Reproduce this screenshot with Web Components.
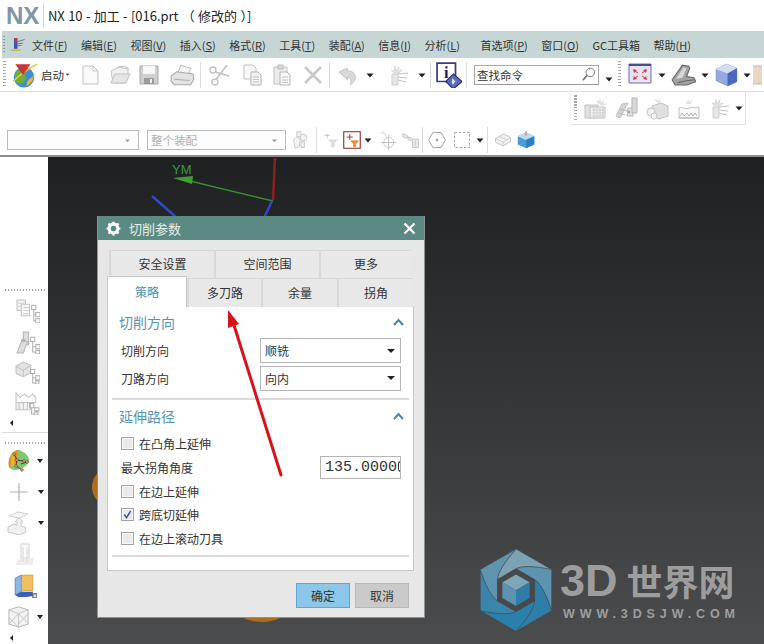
<!DOCTYPE html>
<html lang="zh"><head><meta charset="utf-8"><title>NX 10</title>
<style>html,body{margin:0;padding:0;background:#fff}body{font-family:"Noto Sans CJK SC","Noto Sans",sans-serif}</style></head>
<body>
<nx-app>
  <nx-titlebar slot="top">NX 10 - 加工 - [016.prt （ 修改的 ）]</nx-titlebar>
  <nx-menubar slot="top">
    <nx-menu k="F">文件</nx-menu><nx-menu k="E">编辑</nx-menu><nx-menu k="V">视图</nx-menu><nx-menu k="S">插入</nx-menu><nx-menu k="R">格式</nx-menu><nx-menu k="T">工具</nx-menu><nx-menu k="A">装配</nx-menu><nx-menu k="I">信息</nx-menu><nx-menu k="L">分析</nx-menu><nx-menu k="P" style="margin-left:7px">首选项</nx-menu><nx-menu k="O">窗口</nx-menu><nx-menu>GC工具箱</nx-menu><nx-menu k="H">帮助</nx-menu>
  </nx-menubar>
  <nx-toolbar slot="top" h="34" border>
    <nx-grip style="margin-left:3px"></nx-grip>
    <nx-tool icon="globe" w="29" s="26"></nx-tool>
    <nx-start></nx-start>
    <nx-tool icon="new" w="30" style="margin-left:3px"></nx-tool><nx-tool icon="open" w="30"></nx-tool><nx-tool icon="save" w="28"></nx-tool><nx-tool icon="print" w="37" s="26"></nx-tool><nx-sep></nx-sep>
    <nx-tool icon="scissors" w="36"></nx-tool><nx-tool icon="copy" w="29"></nx-tool><nx-tool icon="paste" w="31"></nx-tool><nx-tool icon="x" w="32"></nx-tool><nx-sep></nx-sep>
    <nx-tool icon="undo" w="34"></nx-tool><nx-tool icon="dd" w="12"></nx-tool><nx-tool icon="burst" w="36" style="margin-left:4px"></nx-tool><nx-tool icon="dd" w="12"></nx-tool><nx-sep style="margin-left:2px"></nx-sep>
    <nx-tool icon="info" w="35" s="26"></nx-tool><nx-sep></nx-sep>
    <nx-search></nx-search>
    <nx-tool icon="dd" w="12" style="margin-left:4px;padding-top:8px;box-sizing:border-box"></nx-tool>
    <nx-grip style="margin-left:3px"></nx-grip>
    <nx-tool icon="fit" w="32"></nx-tool><nx-tool icon="dd" w="12"></nx-tool><nx-tool icon="sketch" w="31" s="25"></nx-tool><nx-tool icon="dd" w="12"></nx-tool><nx-tool icon="cube" w="30" s="25"></nx-tool><nx-tool icon="dd" w="12"></nx-tool><nx-tool icon="partial" w="9" s="24" style="overflow:hidden"></nx-tool>
  </nx-toolbar>
  <nx-toolbar slot="top" h="33" end>
    <nx-floatbar>
      <nx-grip></nx-grip>
      <nx-tool icon="f1" w="30" s="24"></nx-tool><nx-tool icon="f2" w="31" s="24"></nx-tool><nx-tool icon="f3" w="32" s="24"></nx-tool><nx-tool icon="f4" w="31" s="24"></nx-tool><nx-tool icon="burst" w="29" s="24"></nx-tool><nx-tool icon="dd" w="12"></nx-tool>
    </nx-floatbar>
  </nx-toolbar>
  <nx-toolbar slot="top" h="32" dark>
    <nx-combo style="margin-left:7px;width:132px"></nx-combo>
    <nx-combo style="margin-left:8px;width:139px">整个装配</nx-combo>
    <nx-tool icon="asm" w="30" s="20"></nx-tool><nx-sep></nx-sep>
    <nx-tool icon="filt" w="21" s="18" style="margin-left:3px"></nx-tool>
    <nx-tool icon="sel" w="21" s="18"></nx-tool><nx-tool icon="dd" w="12"></nx-tool>
    <nx-tool icon="snap" w="25" s="20"></nx-tool><nx-tool icon="snap2" w="23" s="20"></nx-tool><nx-sep></nx-sep>
    <nx-tool icon="hex" w="28" s="20"></nx-tool><nx-tool icon="rect" w="21" s="20"></nx-tool><nx-tool icon="dd" w="15"></nx-tool><nx-sep></nx-sep>
    <nx-tool icon="wire" w="30" s="18"></nx-tool><nx-tool icon="shade" w="15" s="18"></nx-tool>
  </nx-toolbar>
  <nx-sidebar slot="side">
    <nx-sgrip></nx-sgrip>
    <nx-tool icon="t1" w="44" h="32" s="25" style="margin-left:5px"></nx-tool>
    <nx-tool icon="t2" w="44" h="30" s="25" style="margin-left:5px"></nx-tool>
    <nx-tool icon="t3" w="44" h="30" s="25" style="margin-left:5px"></nx-tool>
    <nx-tool icon="t4" w="44" h="32" s="25" style="margin-left:5px"></nx-tool>
    <nx-more></nx-more>
    <nx-sdiv></nx-sdiv>
    <nx-sgrip style="margin-bottom:1.400px"></nx-sgrip>
    <nx-drop icon="s1" s="24" style="padding-left:6px"></nx-drop>
    <nx-drop icon="s2" s="24"></nx-drop>
    <nx-drop icon="s3" s="24"></nx-drop>
    <nx-drop icon="s4" s="24" nodd style="padding-left:13px"></nx-drop>
    <nx-drop icon="s5" s="25" nodd style="padding-left:12px"></nx-drop>
    <nx-drop icon="s6" s="23"></nx-drop>
    <nx-more></nx-more>
  </nx-sidebar>
  <nx-viewport slot="main">
    <nx-dialog heading="切削参数">
      <nx-tabs slot="tabs"></nx-tabs>
      <nx-section heading="切削方向" h="30">
        <nx-row label="切削方向"><nx-select>顺铣</nx-select></nx-row>
        <nx-row label="刀路方向"><nx-select>向内</nx-select></nx-row>
      </nx-section>
      <nx-section heading="延伸路径" h="32" last>
        <nx-check>在凸角上延伸</nx-check>
        <nx-row label="最大拐角角度" tight><nx-num>135.0000</nx-num></nx-row>
        <nx-check>在边上延伸</nx-check>
        <nx-check checked>跨底切延伸</nx-check>
        <nx-check>在边上滚动刀具</nx-check>
      </nx-section>
      <nx-button slot="actions" primary>确定</nx-button>
      <nx-button slot="actions">取消</nx-button>
    </nx-dialog>
    <nx-watermark></nx-watermark>
  </nx-viewport>
  <nx-annotation slot="over"></nx-annotation>
</nx-app>
<script>
const G='#c2c2c2',L='#ececec';
const ICONS={
dd:`<path d="M8.5 10.5h7L12 14.5z" fill="#222"/>`,
globe:`<circle cx="12" cy="14" r="9.500" fill="#3d8fd0"/><path d="M4 9c4-3 5 1 8 2s2 6-1 8-6 1-7-2 0-5 0-8z" fill="#6fae3a"/><path d="M15 18c2-3 5-4 6-6 0 5-3 9-7 10z" fill="#e3b53a"/><path d="M24 2C16 6 8 12 2 18" stroke="#e9c84a" stroke-width="1.500" fill="none"/><path d="M4 2h14l-7 10z" fill="#c9363a"/>`,
new:`<path d="M5 3h10l5 5v13H5z" fill="#fafafa" stroke="${G}"/><path d="M15 3v5h5" fill="none" stroke="${G}"/>`,
open:`<path d="M3 8l8-4 9 2v6l-3 8H5z" fill="#f2f2f2" stroke="${G}"/><path d="M3 20l4-9h15l-4 9z" fill="#e6e6e6" stroke="${G}"/><path d="M9 5l7-2 5 3" fill="none" stroke="${G}"/>`,
save:`<path d="M3 3h18v18H3z" fill="#d0d0d0" stroke="#aaa"/><path d="M6 3h12v8H6z" fill="#f7f7f7"/><path d="M7 15h10v6H7z" fill="#9a9a9a"/><path d="M13 16h2v4h-2z" fill="#eee"/>`,
print:`<path d="M8 10l3-7 9 3-2 5z" fill="#f5f5f5" stroke="${G}"/><path d="M2 13l5-4 15 2 1 5-3 5H5l-3-3z" fill="#e2e2e2" stroke="#aaa"/><path d="M5 16l14 1" stroke="#aaa"/>`,
scissors:`<circle cx="6" cy="7" r="3" fill="none" stroke="${G}" stroke-width="1.400"/><circle cx="8" cy="19" r="3" fill="none" stroke="${G}" stroke-width="1.400"/><path d="M8.500 9 22 13M9 16.500 20 2" stroke="${G}" stroke-width="1.600" fill="none"/>`,
copy:`<path d="M4 2h9l3 3v11H4z" fill="#f7f7f7" stroke="${G}"/><path d="M11 9h7l3 3v10H11z" fill="#f2f2f2" stroke="#b5b5b5"/><path d="M13 14h6M13 16.500h6M13 19h6" stroke="#c4c4c4"/>`,
paste:`<path d="M4 4h13v17H4z" fill="#ececec" stroke="${G}"/><path d="M8 2h5v4H8z" fill="#ddd" stroke="#b5b5b5"/><path d="M10 9h7l3 3v10H10z" fill="#f8f8f8" stroke="#b5b5b5"/><path d="M12 14h6M12 17h6M12 19.500h6" stroke="#c4c4c4"/>`,
x:`<path d="M4 4l16 16M20 4 4 20" stroke="#c8c8c8" stroke-width="2.600"/>`,
undo:`<path d="M4 9l8-4 1 3c5 0 8 3 7 8-1 3-3 5-5 6 2-4 1-7-3-8l1 3z" fill="#d8d8d8" stroke="#c4c4c4"/>`,
burst:`<path d="M9 3l1 4 3-3-1 4 4-1-3 3H8L5 7l3 1z" fill="#e2e2e2" stroke="#cfcfcf" stroke-width=".6"/><path d="M6 11h6v11H6z" fill="#e6e6e6" stroke="${G}" stroke-width=".7"/><path d="M12 11l10-1M12 14l9 1M12 17l8 2" stroke="${G}"/>`,
info:`<path d="M1 1h17v17H1z" fill="#fff" stroke="#3c3a80" stroke-width="1.600"/><text x="9.500" y="15" font-family="Liberation Serif" font-weight="700" font-size="15" text-anchor="middle" fill="#1c1a60">i</text><path d="M16 11l8 7-8 7-7-7z" fill="#5c6cb8" stroke="#222a70"/><path d="M15 15l3 3-3 3z" fill="#fff"/>`,
search:`<circle cx="14.500" cy="9" r="6" fill="#fff" stroke="#666" stroke-width="1.200"/><path d="M10.500 13 4 20" stroke="#777" stroke-width="2.400"/><path d="M12 6c1-1 2-1.500 3-1.500" stroke="#aaa" fill="none"/>`,
fit:`<path d="M1 1h22v19H1z" fill="#e6e4f4" stroke="#6a6ab0"/><path d="M1 1h22v2H1z" fill="#4a4a90"/><path d="M5 6l4 1-3 3zM19 6l-4 1 3 3zM5 17l4-1-3-3zM19 17l-4-1 3-3z" fill="#d8413a"/><path d="M7 8l3 2M17 8l-3 2M7 15l3-2M17 15l-3-2" stroke="#d8413a"/>`,
sketch:`<path d="M1 17 11 3l6 1 1 2-3 8 7 1 2 4-9 3H4z" fill="#a2a2a2" stroke="#666"/><path d="M5 16 12 5l3 1-4 9z" fill="#d8d8d8"/><path d="M6 20l9-2 8-1" stroke="#666" fill="none"/>`,
cube:`<path d="M2 7l10-5 10 4v13l-9 4-11-5z" fill="#93a9e0" stroke="#6b7fb8" stroke-width=".5"/><path d="M2 7l10-5 10 4-9 5z" fill="#d5ddf5"/><path d="M13 11l9-5v13l-9 4z" fill="#4a68c0"/>`,
partial:`<path d="M0 3h24v18H0z" fill="#e6d8c2" stroke="#bbb"/>`,
f1:`<path d="M2 9h13v13H2z" fill="#e2e2e2" stroke="${G}"/><path d="M7 11h15v11H7z" fill="#f2f2f2" stroke="${G}"/><path d="M9 14h12M9 17h12M9 20h12M11 12v10M14 12v10M17 12v10M20 12v10" stroke="#c4c4c4" stroke-width=".7"/><path d="M17 1l1 5 3-3-1 4 4 1-5 2-4-2-2-4 3 1z" fill="#e2e2e2"/>`,
f2:`<path d="M8 8l6-1-8 15-4-2z" fill="#d4d4d4" stroke="${G}"/><path d="M6 13l7 2M5 17l6 2" stroke="#b5b5b5"/><path d="M14 12h5v8h-6z" fill="#e2e2e2" stroke="#b5b5b5"/><path d="M18 2h5v15h-5z" fill="#d8d8d8" stroke="#b5b5b5"/><circle cx="15" cy="16" r="1.500" fill="#aaa"/>`,
f3:`<path d="M7 10l9-3 7 3v10l-9 3-7-3z" fill="#e0e0e0" stroke="${G}"/><circle cx="6" cy="16" r="4" fill="#f2f2f2" stroke="#c4c4c4"/><circle cx="9" cy="20" r="3" fill="#f2f2f2" stroke="#c4c4c4"/><path d="M12 1l1 4 3-2-1 4-4-1-2-3 3 1z" fill="#e2e2e2"/>`,
f4:`<path d="M2 12c4-2 5 2 10 0s6 1 10-1v11H2z" fill="#f8f8f8" stroke="${G}"/><path d="M3 20l2-3 2 3 3-3 2 3 2-3 2 3 2-3 2 3" fill="none" stroke="#b5b5b5"/><path d="M2 22h20" stroke="#b5b5b5"/><path d="M11 2l1 4 3-2-1 4h-4L8 5l3 1z" fill="#e2e2e2"/>`,
asm:`<path d="M7 2h5v6H7zM3 12l4-4 4 3-1 9-5 2z" fill="#f2f2f2" stroke="${G}"/><circle cx="15" cy="9" r="4" fill="#f2f2f2" stroke="${G}"/><path d="M12 14h4v7h-4z" fill="#f2f2f2" stroke="${G}"/>`,
filt:`<path d="M3 6h7M7 3v7" stroke="#c4c4c4"/><path d="M9 12h11l-4 4v5h-3v-5z" fill="#e2e2e2" stroke="#d0d0d0"/>`,
sel:`<path d="M1 1h22v22H1z" fill="#fff" stroke="#8a2020" stroke-width="1.400"/><path d="M5 8h8M9 4v8" stroke="#a03030" stroke-width="1.200"/><path d="M10 13h11l-4 4v4h-3v-4z" fill="#e8902a" stroke="#c87010" stroke-width=".6"/>`,
snap:`<circle cx="14" cy="15" r="6" fill="none" stroke="${G}"/><path d="M14 6v18M5 15h18" stroke="#b5b5b5"/><path d="M5 3c4 0 6 3 6 6" stroke="#c4c4c4" fill="none"/>`,
snap2:`<path d="M2 4l6 3-1 3-5-2zM8 8l5 2 1 3-5-1zM14 11h7v10h-7zM17 13v6" fill="#e8e8e8" stroke="#c4c4c4"/>`,
hex:`<path d="M7 3h10l5 9-5 9H7l-5-9z" fill="none" stroke="#a4a4a4" stroke-width="1.200"/><circle cx="12" cy="12" r="1.500" fill="#999"/>`,
rect:`<path d="M3 3h18v18H3z" fill="none" stroke="#999" stroke-dasharray="3 2"/>`,
wire:`<path d="M2 10l11-6 9 5v5l-10 6-10-5z" fill="#f2f2f2" stroke="#b5b5b5"/><path d="M2 10l10 5 10-6M12 15v5M7 7l10 5" stroke="#c4c4c4" fill="none"/>`,
shade:`<path d="M1 7l11-5 11 5v11l-11 5-11-5z" fill="#4d9ad8"/><path d="M1 7l11-5 11 5-11 5z" fill="#bddcf2"/><path d="M12 12l11-5v11l-11 5z" fill="#2f7cc0"/><path d="M12 0v6" stroke="#d8413a"/>`,
t1:`<path d="M2 2h8v10H2z" fill="#f4f4f4" stroke="${G}"/><path d="M6 6h8v11H6z" fill="#f8f8f8" stroke="${G}"/><path d="M8 9h5M8 12h5M8 15h5M3 5h6M3 8h3" stroke="#d0d0d0"/><path d="M16 7h4v4h-4zM20 14h4v4h-4zM20 20h4v4h-4zM18 11v11h2M18 16h2" fill="none" stroke="#b0b0b0"/>`,
t2:`<path d="M8 3h5v12H8z" fill="#e0e0e0" stroke="#b5b5b5"/><path d="M2 23l5-13 5 2-4 11z" fill="#dedede" stroke="#b5b5b5"/><circle cx="8" cy="11" r="2" fill="#b5b5b5"/><path d="M15 8h4v4h-4zM20 15h4v4h-4zM20 20.500h3.500v3.500h-3.500zM17 12v10h3M17 17h3" fill="none" stroke="#b0b0b0"/>`,
t3:`<path d="M1 7l7-4 7 3v7l-7 4-7-3z" fill="#e4e4e4" stroke="${G}"/><path d="M8 11v6M1 7l7 4 7-5" stroke="#c4c4c4" fill="none"/><path d="M15 10h4v4h-4zM20 16h4v4h-4zM20 21h3v3h-3zM17 14v9h3M17 18h3" fill="none" stroke="#b0b0b0"/>`,
t4:`<path d="M1 3l4 4 4-3 4 3 4-3 3 3v5H1z" fill="#fcfcfc" stroke="${G}"/><path d="M1 12h14v7H1zM4 12v7M8 12v7M12 12v7" fill="#f2f2f2" stroke="#c4c4c4"/><path d="M14 13h4v4h-4zM19 17h4v3h-4zM19 21h3v3h-3zM16 17v6h3" fill="none" stroke="#b0b0b0"/>`,
s1:`<path d="M3 18C1 9 7 1 13 1c6 2 11 7 10 12-3 5-9 8-14 8-3 0-5-1-6-3z" fill="#7ccb6a"/><path d="M3 18C1 9 7 1 12 1c1 4-1 8-3 14-2 2-4 3-6 3z" fill="#e88d2a"/><path d="M8 3C7 7 6 12 7 17" stroke="#d8c22a" stroke-width="3" fill="none"/><path d="M8 5l3 6 7 1M11 11l-1 6 6 4M15 15l6-2" stroke="#7a2a2a" fill="none"/><path d="M7 4h2v2H7zM10 10h2v2h-2zM17 11h2v2h-2zM9 16h2v2H9zM15 20h2v2h-2zM20 12h2v2h-2z" fill="#fff" stroke="#7a2a2a" stroke-width=".7"/>`,
s2:`<path d="M12 3v18M3 12h18" stroke="#b0b0b0" stroke-width="1.200"/>`,
s3:`<path d="M2 5l9-4 10 2-9 4z" fill="#f6f6f6" stroke="#d0d0d0"/><path d="M1 16l6-3 3 1v-3H8l4-4 4 4h-2v4l4 1 1 5-7 3-11-3z" fill="#f0f0f0" stroke="#c8c8c8"/>`,
s4:`<path d="M8 1h8v14H8z" fill="#fbfbfb" stroke="#d0d0d0"/><path d="M2 22l5-7h14l-2 7z" fill="#ececec"/><path d="M10 4v15M14 4v15" stroke="#d8d8d8"/>`,
s5:`<path d="M3 5l6-3v16l-6 3z" fill="#8ab8e8" stroke="#3c6cb0" stroke-width=".6"/><path d="M9 2h11v15H9z" fill="#f0c060" stroke="#c08830" stroke-width=".6"/><path d="M3 21l6-3h11v4l-6 1H6z" fill="#3560c0"/><path d="M20 20h4v4h-4z" fill="#ddd" stroke="#555"/>`,
s6:`<path d="M2 5l10-3 10 3v15l-10 3-10-3z" fill="#f2f2f2" stroke="#b5b5b5"/><path d="M2 5l10 4 10-4M12 9v14M2 13l10 10M12 9l10 10M22 9 12 20M2 20 12 9" stroke="#c4c4c4" fill="none"/>`
};
function def(name,css,html,init){customElements.define(name,class extends HTMLElement{
  connectedCallback(){ if(this.shadowRoot)return; const r=this.attachShadow({mode:'open'});
    r.innerHTML=`<style>${css}</style>`+(typeof html==='function'?html(this):html); if(init)init(this,r);} });}
const svg=(n,s)=>`<svg width="${s}" height="${s}" viewBox="0 0 24 24" style="display:block;flex:none">${ICONS[n]||''}</svg>`;

def('nx-app',`:host{display:block;position:relative;width:764px;height:644px;overflow:hidden;background:#fff;font-family:"Noto Sans CJK SC","Noto Sans",sans-serif}
 .w{display:flex;flex-direction:column;height:100%}.b{flex:1;display:flex;min-height:0}`,
 `<div class="w"><slot name="top"></slot><div class="b"><slot name="side"></slot><slot name="main"></slot></div></div><slot name="over"></slot>`);
def('nx-titlebar',`:host{display:flex;align-items:center;height:31px;padding-left:6px;box-sizing:border-box}
 .l{font:700 24px/31px "Liberation Sans",sans-serif;color:#7f96a6;width:37px}
 .s{width:1px;height:25px;background:#d8d8d8;margin-right:4px}
 .t{font-size:13px;color:#222;white-space:pre;word-spacing:.5px;letter-spacing:-.03px}`,
 `<span class="l">NX</span><span class="s"></span><span class="t"><slot></slot></span>`);
def('nx-menubar',`:host{display:flex;align-items:center;height:27px;margin-left:2px;background:#c6d6d5;font-size:11px;color:#333;box-sizing:border-box}
 .g{width:2px;height:17px;margin:0 2px 0 1px;background:repeating-linear-gradient(#8a9a99 0 1px,transparent 1px 3px)}
 .i{flex:none;margin:0 6px 0 2px}.m{display:flex;gap:13.500px}`,
 `<span class="g"></span><svg class="i" width="17" height="17" viewBox="0 0 24 24"><path d="M7 3h5v15H7z" fill="#3a55b5"/><path d="M3 19h13v2H3z" fill="#d8b030"/><path d="M12 8l10-3M12 11l8-1M12 14l6-1" stroke="#556" fill="none"/><path d="M7 3 12 3 9.500 12z" fill="#c8383a"/></svg><div class="m"><slot></slot></div>`);
def('nx-menu',`:host{display:block;white-space:nowrap}u{text-underline-offset:1px}`,
 e=>`<slot></slot>${e.hasAttribute('k')?`(<u>${e.getAttribute('k')}</u>)`:''}`);
def('nx-toolbar',`:host{display:flex;align-items:center;flex:none;box-sizing:border-box}
 :host([border]){border-bottom:1px solid #dcdcdc}:host([end]){justify-content:flex-end;padding-right:18px;align-items:stretch}
 :host([dark]){border-bottom:2px solid #8f8f8f}`,`<slot></slot>`,
 e=>{e.style.height=e.getAttribute('h')+'px'});
def('nx-grip',`:host{display:block;flex:none;width:3px;height:27px;background:repeating-linear-gradient(#a5a5a5 0 1.500px,transparent 1.500px 3px);margin-right:3px}`,``);
def('nx-sep',`:host{display:block;flex:none;width:1px;height:26px;background:#dcdcdc}`,``);
def('nx-tool',`:host{display:flex;align-items:center;justify-content:center;flex:none;height:28px}`,
 e=>svg(e.getAttribute('icon'),+(e.getAttribute('s')||24)),
 e=>{e.style.width=e.getAttribute('w')+'px'; if(e.hasAttribute('h'))e.style.height=e.getAttribute('h')+'px'; });
def('nx-start',`:host{display:flex;align-items:center;width:34px;box-sizing:border-box;padding-left:3px;flex:none;font-size:11.500px;color:#333;white-space:nowrap}svg{margin-left:-2px}`,
 `<span>启动</span>${svg('dd',11)}`);
def('nx-search',`:host{display:flex;align-items:center;justify-content:space-between;flex:none;width:125px;height:20px;margin-left:7px;border:1px solid #aaa;border-bottom-color:#999;box-sizing:border-box;padding:0 1px 0 2px;font-size:11.500px;color:#333}`,
 `<span>查找命令</span>${svg('search',17)}`);
def('nx-floatbar',`:host{display:flex;align-items:center;width:176px;box-sizing:border-box;padding-left:3px;border-right:1px solid #e3e3e3;border-bottom:1px solid #e3e3e3;border-left:1px solid #f0f0f0}`,`<slot></slot>`);
def('nx-combo',`:host{display:flex;align-items:center;justify-content:space-between;flex:none;height:20px;box-sizing:border-box;border:1px solid #bbb;background:#fdfdfd;padding:0 2px 0 3px;font-size:11.500px;color:#b0b0b0;min-width:0}
 svg{margin-left:auto}`,`<slot></slot>${svg('dd',17).replace('#222','#999')}`);
def('nx-sidebar',`:host{display:flex;flex-direction:column;flex:none;width:48px;padding-top:130px;box-sizing:border-box;background:#fff}`,`<slot></slot>`);
def('nx-sgrip',`:host{display:block;flex:none;height:2px;width:40px;margin:2px 0 3px 5px;background:repeating-linear-gradient(90deg,#a5a5a5 0 1.500px,transparent 1.500px 3px)}`,``);
def('nx-more',`:host{display:block;flex:none;height:14px;padding-left:10px;box-sizing:border-box}i{display:block;margin-top:2px;width:0;height:0;border:3.500px solid transparent;border-right:3.500px solid #222;border-left:0}`,`<i></i>`);
def('nx-sdiv',`:host{display:block;flex:none;height:1px;background:#ddd;margin:0 0 7px 2px}`,``);
def('nx-drop',`:host{display:flex;align-items:center;flex:none;height:31.200px;padding-left:7px;box-sizing:border-box}i{width:0;height:0;border:3.500px solid transparent;border-top:4px solid #222;margin:3px 0 0 7px}`,
 e=>svg(e.getAttribute('icon'),+e.getAttribute('s'))+(e.hasAttribute('nodd')?'':'<i></i>'));
def('nx-viewport',`:host{display:block;position:relative;flex:1;background:linear-gradient(#1f2022,#333436 45%,#4b4c4e)}
 svg{position:absolute;left:0;top:0}`,
 `<svg width="716" height="487" viewBox="48 157 716 487">
 <ellipse cx="106" cy="487" rx="14" ry="17" fill="#a96f1e"/><ellipse cx="262" cy="610" rx="24" ry="12" fill="#a96f1e"/>
 <path d="M275 158 273 200" stroke="#8c2020" stroke-width="2.500"/>
 <path d="M273 201 190 181" stroke="#3a8a2e" stroke-width="1.500"/><path d="M173 178l20-2-1 8z" fill="#3fa030"/>
 <text x="172" y="174" font-family="Liberation Sans" font-size="13" fill="#3a9a3a">YM</text>
 <path d="M152 196 177 218M272 201 264 218" stroke="#2f48c8" stroke-width="2.500"/>
 </svg><slot></slot>`);
def('nx-dialog',`:host{display:block;position:absolute;left:49px;top:59px;width:328px;height:402px;box-sizing:border-box;background:#e7e7e7;border:1px solid #8c9492;border-top:0;color:#333;font-size:12px}
 .h{display:flex;align-items:center;height:24px;background:#5b8a82;color:#e6efee;font-size:13px;padding:0 8px 0 8px}
 .h span{margin-left:8px;flex:1}
 .c{padding:10px 10px 0 9px}
 .p{height:265px;box-sizing:border-box;background:#fff;border:1px solid #c8c8c8;padding:0 4px;margin-top:-1px}
 .a{display:flex;justify-content:flex-end;gap:5px;padding:12px 5px 0 0}`,
 e=>`<div class="h"><svg width="15" height="15" viewBox="0 0 24 24"><circle cx="12" cy="12" r="7" fill="none" stroke="#fff" stroke-width="5"/><path d="M12 1v5M12 18v5M1 12h5M18 12h5M4 4l4 4M16 16l4 4M4 20l4-4M16 8l4-4" stroke="#fff" stroke-width="3.500"/></svg><span>${e.getAttribute('heading')}</span><svg width="13" height="13" viewBox="0 0 13 13"><path d="M1.500 1.500l10 10M11.500 1.500l-10 10" stroke="#fff" stroke-width="2.200"/></svg></div>
 <div class="c"><slot name="tabs"></slot><div class="p"><slot></slot></div><div class="a"><slot name="actions"></slot></div></div>`);
def('nx-tabs',`:host{display:block}
 .r{display:flex}.r1{margin:0 2px 0 2px;height:28px}.r2{height:29px;position:relative}
 .t{display:flex;align-items:center;justify-content:center;box-sizing:border-box;background:#e8e8e8;border-top:1px solid #d8d8d8;border-left:2px solid #d8d8d8;color:#333;font-size:12px;padding-bottom:2px}
 .a{background:#fff;color:#4d8fae;border:1px solid #c8c8c8;border-bottom:0;height:31px;margin-top:-2px;position:relative;z-index:1}`,
 `<div class="r r1"><div class="t" style="width:105px">安全设置</div><div class="t" style="width:105px">空间范围</div><div class="t" style="width:92px">更多</div></div>
 <div class="r r2"><div class="t a" style="width:80px">策略</div><div class="t" style="width:74px">多刀路</div><div class="t" style="width:76px">余量</div><div class="t" style="width:76px">拐角</div></div>`);
def('nx-section',`:host{display:block;border-bottom:2px solid #dadada;height:93px;box-sizing:border-box}
 :host([last]){height:157px}
 .h{display:flex;justify-content:space-between;align-items:center;padding:0 5px 0 7px;color:#5794b4;font-size:14px}
 .b{padding-left:9px;padding-right:8px}`,
 e=>`<div class="h" style="height:${e.getAttribute('h')}px"><span>${e.getAttribute('heading')}</span><svg width="11" height="8" viewBox="0 0 11 8"><path d="M1 7l4.500-5L10 7" fill="none" stroke="#4a86a8" stroke-width="2"/></svg></div><div class="b"><slot></slot></div>`);
def('nx-row',`:host{display:flex;justify-content:space-between;align-items:center;height:27.500px;color:#333;font-size:12px;white-space:nowrap}
 :host([tight]){height:24px}`,e=>`<span>${e.getAttribute('label')}</span><slot></slot>`);
def('nx-select',`:host{display:flex;align-items:center;justify-content:space-between;width:141px;height:25px;box-sizing:border-box;border:1px solid #b4b4b4;padding:0 5px 0 4px;background:#fff;font-size:12px}
 i{width:0;height:0;border:4px solid transparent;border-top:4.500px solid #222;margin-top:4px}`,`<span><slot></slot></span><i></i>`);
def('nx-num',`:host{display:block;width:81px;height:23px;box-sizing:border-box;border:1px solid #b4b4b4;font:15px/21px "Liberation Mono",monospace;color:#333;padding-left:4px;overflow:hidden;white-space:nowrap}
 :host::after{content:"";display:inline-block;width:3px;height:9px;border:1px solid #333;border-right:0;border-radius:3px 0 0 3px;margin-left:1px;vertical-align:-1px}`,`<slot></slot>`);
def('nx-check',`:host{display:flex;align-items:center;gap:5px;height:23.500px;font-size:12px;color:#333;white-space:nowrap}
 i{display:block;width:11px;height:11px;border:1px solid #a4a4a4;background:#eaeaea;box-shadow:inset 0 0 0 1px #f6f6f6}`,
 e=>`<i>${e.hasAttribute('checked')?'<svg width="11" height="11" viewBox="0 0 12 12" style="display:block"><path d="M2.500 6l2.500 3.500L9.500 2" fill="none" stroke="#3f4f9c" stroke-width="1.600"/></svg>':''}</i><slot></slot>`);
def('nx-button',`:host{display:flex;align-items:center;justify-content:center;width:54px;height:25px;box-sizing:border-box;border:1px solid #b8b8b8;background:#cacaca;font-size:12px;color:#333}
 :host([primary]){background:#8cc6e8;border-color:#5fa6cf}`,`<slot></slot>`);
def('nx-watermark',`:host{display:flex;position:absolute;left:432px;top:392px;align-items:flex-start;gap:8px;color:#9d9d9d}
 .t{display:flex;flex-direction:column;padding-top:8px}
 .a{font:700 45px/47px "Liberation Sans","Noto Sans CJK SC",sans-serif;white-space:nowrap;display:flex;align-items:baseline}
 .a span{font-family:"Noto Sans CJK SC",sans-serif;font-size:36px;margin-left:9px}
 .b{font:700 12.500px/16px "Liberation Sans",sans-serif;letter-spacing:4.900px;margin:2px 0 0 3px;white-space:nowrap}`,
 `<svg id="lg" width="72" height="82" viewBox="33 27 214 245" style="position:static;display:block"></svg><div class="t"><div class="a">3D<span>世界网</span></div><div class="b">WWW.3DSJW.COM</div></div>`,
 (e,r)=>{const hex=R=>[...Array(6)].map((_,i)=>{const a=(i*60-90)*Math.PI/180;return[140+R*Math.cos(a),150+R*Math.sin(a)]});
  const V=hex(123),I=hex(64),C=['#7da2b4','#5b93b0','#2f7ea8','#2b80ab','#3b84ab','#5f94ae'];let s='';
  for(let i=0;i<6;i++){const j=(i+1)%6,k=(i+5)%6;
   const c=(a,b,d)=>[(a[0]*.5+b[0]*.25+d[0]*.25),(a[1]*.5+b[1]*.25+d[1]*.25)];
   const q1=c(I[i],V[i],V[j]),q0=c(I[k],V[k],V[i]);
   s+=`<path d="M${I[k]} Q${q0} ${V[i]} L${V[j]} Q${q1} ${I[i]}Z" fill="${C[i]}" stroke="#46484a" stroke-width="1.500"/>`;}
  s+=`<path d="M${I.join('L')}Z" fill="#46484a"/>`;
  const U=hex(47);s+=`<path d="M${U[0]}L${U[1]}L140 150L${U[5]}Z" fill="#7fa5b8"/><path d="M${U[1]}L${U[2]}L${U[3]}L140 150Z" fill="#2f7da6"/><path d="M${U[5]}L140 150L${U[3]}L${U[4]}Z" fill="#5b93b0"/>`;
  r.getElementById('lg').innerHTML=s;});
def('nx-annotation',`:host{display:block;position:absolute;inset:0;pointer-events:none}svg{display:block}`,
 `<svg width="764" height="644"><path d="M281 475 233 322" stroke="#d8121a" stroke-width="3" stroke-linecap="round"/><path d="M228 310 228 328 239 324z" fill="#d8121a"/></svg>`);
</script>
</body></html>
